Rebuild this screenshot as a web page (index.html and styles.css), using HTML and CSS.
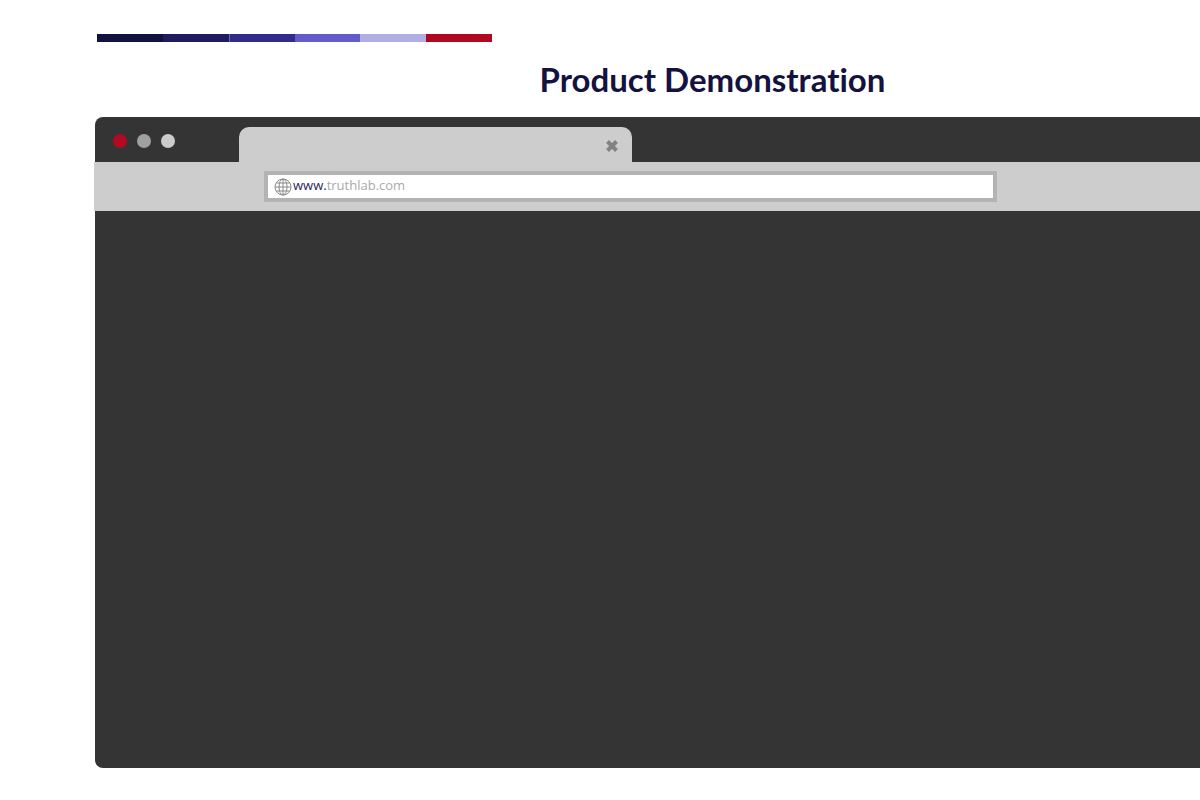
FILE: index.html
```html
<!DOCTYPE html>
<html lang="en">
<head>
    <meta charset="UTF-8">
    <meta name="viewport" content="width=device-width, initial-scale=1.0">
    <title>Product Demonstration</title>
    <link rel="stylesheet" href="styles.css">
</head>
<body>
    <main class="slide">
        <div class="stripes">
            <span class="stripe midnight"></span>
            <span class="stripe navy"></span>
            <span class="stripe indigo"></span>
            <span class="stripe violet"></span>
            <span class="stripe lavender"></span>
            <span class="stripe red"></span>
        </div>
        <h1 class="title">Product Demonstration</h1>
        <section class="browser">
            <div class="tab-bar">
                <div class="dots">
                    <span class="dot dot-red"></span>
                    <span class="dot dot-grey"></span>
                    <span class="dot dot-light"></span>
                </div>
                <div class="tab">
                    <button class="close" type="button" aria-label="Close tab">
                        <svg width="14" height="14" viewBox="0 0 14 14"><path d="M2.5 2.5L11.5 11.5M11.5 2.5L2.5 11.5"/></svg>
                    </button>
                </div>
            </div>
            <div class="toolbar">
                <div class="address">
                    <svg class="globe" width="18" height="18" viewBox="0 0 18 18">
                        <circle cx="9" cy="9" r="8"/>
                        <ellipse cx="9" cy="9" rx="4" ry="8"/>
                        <path d="M9 1V17M1 9H17M2.5 5H15.5M2.5 13H15.5"/>
                    </svg>
                    <label class="prefix" for="url">www.</label>
                    <input class="url" id="url" type="text" value="truthlab.com">
                </div>
            </div>
            <div class="screen"></div>
        </section>
    </main>
</body>
</html>
```

FILE: styles.css
```css
* {
    box-sizing: border-box;
}
body {
    margin: 0;
    background-color: #fff;
    font-family: "Open Sans", "Noto Sans", sans-serif;
}
.slide {
    display: flex;
    flex-direction: column;
    min-height: 100vh;
    padding: 34px 0 32px 95px;
}
/* Color stripes */
.stripes {
    display: grid;
    grid-template-columns: repeat(6, 1fr);
    width: 36%;
    max-width: 395px;
    height: 8px;
    margin-left: 2px;
}
.midnight {
    background-color: #13123f;
}
.navy {
    background-color: #1e1b5e;
}
.indigo {
    background-color: #302c8e;
    border-left: 1px solid #6b68b0;
}
.violet {
    background-color: #625ccb;
}
.lavender {
    background-color: #b0aee3;
}
.red {
    background-color: #b00820;
}
.title {
    margin: 17px 0 18px;
    padding-left: 130px;
    color: #14123f;
    font-family: Lato, sans-serif;
    font-size: 33px;
    font-weight: 700;
    font-variant-ligatures: none;
    line-height: 40px;
    text-align: center;
}
/* Browser window */
.browser {
    display: flex;
    flex: 1;
    flex-direction: column;
    border-radius: 8px 0 0 8px;
    background-color: #343434;
}
.tab-bar {
    display: flex;
    align-items: flex-end;
    height: 45px;
}
.dots {
    display: flex;
    gap: 10px;
    width: 144px;
    padding: 0 0 14px 18px;
}
.dot {
    width: 14px;
    height: 14px;
    border-radius: 50%;
}
.dot-red {
    background-color: #b30a24;
}
.dot-grey {
    background-color: #a0a0a0;
}
.dot-light {
    background-color: #cbcbcb;
}
.tab {
    display: flex;
    align-items: center;
    justify-content: flex-end;
    width: 393px;
    height: 35px;
    padding: 2px 13px 0 0;
    border-radius: 10px 10px 0 0;
    background-color: #cdcdcd;
}
.close {
    display: flex;
    padding: 0;
    border: 0;
    background: none;
    cursor: pointer;
}
.close path {
    stroke: #828282;
    stroke-width: 4;
}
.toolbar {
    height: 49px;
    margin-left: -1px;
    padding: 9px 203px 9px 170px;
    background-color: #cdcdcd;
}
.address {
    display: flex;
    align-items: center;
    height: 31px;
    padding: 0 6px;
    border: 4px solid #b3b3b3;
    background-color: #fff;
    font-size: 13px;
    line-height: 18px;
}
.globe {
    fill: none;
    stroke: #8a8a8a;
    stroke-width: 1;
}
.prefix {
    padding: 0 0 4px 1px;
    color: #2b2658;
}
.url {
    flex: 1;
    min-width: 0;
    padding: 0 0 4px;
    border: 0;
    outline: 0;
    background: none;
    color: #a9a9a9;
    font: inherit;
}
.screen {
    flex: 1;
}
```
